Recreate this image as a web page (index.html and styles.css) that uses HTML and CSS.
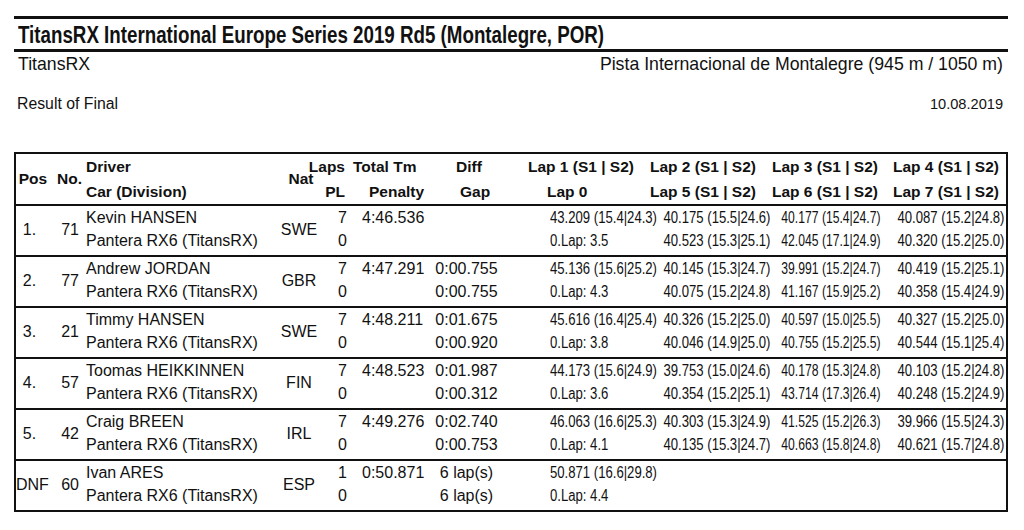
FILE: index.html
```html
<!DOCTYPE html>
<html lang="en">
<head>
<meta charset="utf-8">
<title>TitansRX Result of Final</title>
<link rel="stylesheet" href="styles.css">
</head>
<body>
<div class="page">
  <div class="title"><span class="sq">TitansRX International Europe Series 2019 Rd5 (Montalegre, POR)</span></div>
  <div class="subline">
    <span class="series">TitansRX</span>
    <span class="track">Pista Internacional de Montalegre (945 m / 1050 m)</span>
  </div>
  <div class="resline">
    <span class="result">Result of Final</span>
    <span class="date">10.08.2019</span>
  </div>

  <div class="table">
    <div class="row hdr">
      <div class="c-pos">Pos</div>
      <div class="c-no">No.</div>
      <div class="c-drv1">Driver</div>
      <div class="c-drv2">Car (Division)</div>
      <div class="c-nat">Nat</div>
      <div class="c-laps1"><span>Laps</span></div>
      <div class="c-pl">PL</div>
      <div class="c-tot">Total Tm</div>
      <div class="c-pen">Penalty</div>
      <div class="c-diff">Diff</div>
      <div class="c-gap">Gap</div>
      <div class="c-l1">Lap 1 (S1 | S2)</div>
      <div class="c-l0">Lap 0</div>
      <div class="c-l2">Lap 2 (S1 | S2)</div>
      <div class="c-l5">Lap 5 (S1 | S2)</div>
      <div class="c-l3">Lap 3 (S1 | S2)</div>
      <div class="c-l6">Lap 6 (S1 | S2)</div>
      <div class="c-l4">Lap 4 (S1 | S2)</div>
      <div class="c-l7">Lap 7 (S1 | S2)</div>
    </div>

    <div class="row">
      <div class="c-pos">1.</div>
      <div class="c-no">71</div>
      <div class="c-drv1">Kevin HANSEN</div>
      <div class="c-drv2">Pantera RX6 (TitansRX)</div>
      <div class="c-nat">SWE</div>
      <div class="c-laps1">7</div>
      <div class="c-pl">0</div>
      <div class="c-tot">4:46.536</div>
      <div class="c-l1 lap"><span>43.209 (15.4|24.3)</span></div>
      <div class="c-l0 lap"><span>0.Lap: 3.5</span></div>
      <div class="c-l2 lap"><span>40.175 (15.5|24.6)</span></div>
      <div class="c-l5 lap"><span>40.523 (15.3|25.1)</span></div>
      <div class="c-l3 lap"><span>40.177 (15.4|24.7)</span></div>
      <div class="c-l6 lap"><span>42.045 (17.1|24.9)</span></div>
      <div class="c-l4 lap"><span>40.087 (15.2|24.8)</span></div>
      <div class="c-l7 lap"><span>40.320 (15.2|25.0)</span></div>
    </div>

    <div class="row">
      <div class="c-pos">2.</div>
      <div class="c-no">77</div>
      <div class="c-drv1">Andrew JORDAN</div>
      <div class="c-drv2">Pantera RX6 (TitansRX)</div>
      <div class="c-nat">GBR</div>
      <div class="c-laps1">7</div>
      <div class="c-pl">0</div>
      <div class="c-tot">4:47.291</div>
      <div class="c-diff">0:00.755</div>
      <div class="c-gap">0:00.755</div>
      <div class="c-l1 lap"><span>45.136 (15.6|25.2)</span></div>
      <div class="c-l0 lap"><span>0.Lap: 4.3</span></div>
      <div class="c-l2 lap"><span>40.145 (15.3|24.7)</span></div>
      <div class="c-l5 lap"><span>40.075 (15.2|24.8)</span></div>
      <div class="c-l3 lap"><span>39.991 (15.2|24.7)</span></div>
      <div class="c-l6 lap"><span>41.167 (15.9|25.2)</span></div>
      <div class="c-l4 lap"><span>40.419 (15.2|25.1)</span></div>
      <div class="c-l7 lap"><span>40.358 (15.4|24.9)</span></div>
    </div>

    <div class="row">
      <div class="c-pos">3.</div>
      <div class="c-no">21</div>
      <div class="c-drv1">Timmy HANSEN</div>
      <div class="c-drv2">Pantera RX6 (TitansRX)</div>
      <div class="c-nat">SWE</div>
      <div class="c-laps1">7</div>
      <div class="c-pl">0</div>
      <div class="c-tot">4:48.211</div>
      <div class="c-diff">0:01.675</div>
      <div class="c-gap">0:00.920</div>
      <div class="c-l1 lap"><span>45.616 (16.4|25.4)</span></div>
      <div class="c-l0 lap"><span>0.Lap: 3.8</span></div>
      <div class="c-l2 lap"><span>40.326 (15.2|25.0)</span></div>
      <div class="c-l5 lap"><span>40.046 (14.9|25.0)</span></div>
      <div class="c-l3 lap"><span>40.597 (15.0|25.5)</span></div>
      <div class="c-l6 lap"><span>40.755 (15.2|25.5)</span></div>
      <div class="c-l4 lap"><span>40.327 (15.2|25.0)</span></div>
      <div class="c-l7 lap"><span>40.544 (15.1|25.4)</span></div>
    </div>

    <div class="row">
      <div class="c-pos">4.</div>
      <div class="c-no">57</div>
      <div class="c-drv1">Toomas HEIKKINNEN</div>
      <div class="c-drv2">Pantera RX6 (TitansRX)</div>
      <div class="c-nat">FIN</div>
      <div class="c-laps1">7</div>
      <div class="c-pl">0</div>
      <div class="c-tot">4:48.523</div>
      <div class="c-diff">0:01.987</div>
      <div class="c-gap">0:00.312</div>
      <div class="c-l1 lap"><span>44.173 (15.6|24.9)</span></div>
      <div class="c-l0 lap"><span>0.Lap: 3.6</span></div>
      <div class="c-l2 lap"><span>39.753 (15.0|24.6)</span></div>
      <div class="c-l5 lap"><span>40.354 (15.2|25.1)</span></div>
      <div class="c-l3 lap"><span>40.178 (15.3|24.8)</span></div>
      <div class="c-l6 lap"><span>43.714 (17.3|26.4)</span></div>
      <div class="c-l4 lap"><span>40.103 (15.2|24.8)</span></div>
      <div class="c-l7 lap"><span>40.248 (15.2|24.9)</span></div>
    </div>

    <div class="row">
      <div class="c-pos">5.</div>
      <div class="c-no">42</div>
      <div class="c-drv1">Craig BREEN</div>
      <div class="c-drv2">Pantera RX6 (TitansRX)</div>
      <div class="c-nat">IRL</div>
      <div class="c-laps1">7</div>
      <div class="c-pl">0</div>
      <div class="c-tot">4:49.276</div>
      <div class="c-diff">0:02.740</div>
      <div class="c-gap">0:00.753</div>
      <div class="c-l1 lap"><span>46.063 (16.6|25.3)</span></div>
      <div class="c-l0 lap"><span>0.Lap: 4.1</span></div>
      <div class="c-l2 lap"><span>40.303 (15.3|24.9)</span></div>
      <div class="c-l5 lap"><span>40.135 (15.3|24.7)</span></div>
      <div class="c-l3 lap"><span>41.525 (15.2|26.3)</span></div>
      <div class="c-l6 lap"><span>40.663 (15.8|24.8)</span></div>
      <div class="c-l4 lap"><span>39.966 (15.5|24.3)</span></div>
      <div class="c-l7 lap"><span>40.621 (15.7|24.8)</span></div>
    </div>

    <div class="row last">
      <div class="c-pos">DNF</div>
      <div class="c-no">60</div>
      <div class="c-drv1">Ivan ARES</div>
      <div class="c-drv2">Pantera RX6 (TitansRX)</div>
      <div class="c-nat">ESP</div>
      <div class="c-laps1">1</div>
      <div class="c-pl">0</div>
      <div class="c-tot">0:50.871</div>
      <div class="c-diff">6 lap(s)</div>
      <div class="c-gap">6 lap(s)</div>
      <div class="c-l1 lap"><span>50.871 (16.6|29.8)</span></div>
      <div class="c-l0 lap"><span>0.Lap: 4.4</span></div>
    </div>
  </div>
</div>
</body>
</html>
```

FILE: styles.css
```css
* { box-sizing: border-box; }

html, body {
  margin: 0;
  background: #fff;
}

body {
  font-family: "Liberation Sans", Arial, sans-serif;
  color: #111;
}

.page {
  width: 1024px;
  padding: 16px 16px 0 14px;
}

.title {
  border-top: 3px solid #111;
  border-bottom: 3px solid #111;
  padding: 2px 0 0 4px;
  height: 36px;
  font-weight: bold;
  font-size: 23px;
  line-height: 28px;
  white-space: nowrap;
}

.title .sq {
  display: inline-block;
  transform: scaleX(0.815);
  transform-origin: left center;
}

.subline {
  display: flex;
  justify-content: space-between;
  align-items: baseline;
  padding: 1px 5px 0 4px;
  font-size: 17.7px;
  line-height: 22px;
}

.resline {
  display: flex;
  justify-content: space-between;
  align-items: baseline;
  margin-top: 18px;
  padding: 0 5px 0 3px;
  line-height: 22px;
}

.result { font-size: 15.8px; }
.date { font-size: 14.6px; }

.table {
  margin-top: 37px;
  width: 994px;
  border: 2px solid #111;
}

.row {
  display: grid;
  grid-template-columns: 34px 32px 190px 54px 22px 84px 68px 145px 125px 115px 121px;
  grid-template-rows: 23px 24px;
  padding-bottom: 2px;
  border-bottom: 2px solid #111;
  font-size: 16px;
  white-space: nowrap;
}

.row.last { border-bottom: none; }

.row > div { line-height: 1; display: flex; align-items: center; }

.row.hdr {
  grid-template-rows: 25px 25px;
  padding-bottom: 0;
  font-weight: bold;
  font-size: 15.5px;
}

/* placement */
.c-pos  { grid-column: 1; grid-row: 1 / 3; justify-content: safe center; padding-right: 7px; }
.c-no   { grid-column: 2; grid-row: 1 / 3; justify-content: flex-end; padding-right: 3px; }
.c-drv1 { grid-column: 3; grid-row: 1; padding-left: 4px; }
.c-drv2 { grid-column: 3; grid-row: 2; padding-left: 4px; }
.c-nat  { grid-column: 4; grid-row: 1 / 3; justify-content: center; }
.c-laps1{ grid-column: 5; grid-row: 1; justify-content: flex-end; padding-right: 1px; }
.c-pl   { grid-column: 5; grid-row: 2; justify-content: flex-end; padding-right: 1px; }
.c-tot  { grid-column: 6; grid-row: 1; padding-left: 14px; }
.c-pen  { grid-column: 6; grid-row: 2; padding-left: 21px; }
.c-diff { grid-column: 7; grid-row: 1; justify-content: center; padding-left: 1px; }
.c-gap  { grid-column: 7; grid-row: 2; justify-content: center; padding-left: 1px; }
.c-l1   { grid-column: 8; grid-row: 1; padding-left: 50px; }
.c-l0   { grid-column: 8; grid-row: 2; padding-left: 50px; }
.c-l2   { grid-column: 9; grid-row: 1; justify-content: flex-end; }
.c-l5   { grid-column: 9; grid-row: 2; justify-content: flex-end; }
.c-l3   { grid-column: 10; grid-row: 1; justify-content: flex-end; padding-right: 5px; }
.c-l6   { grid-column: 10; grid-row: 2; justify-content: flex-end; padding-right: 5px; }
.c-l4   { grid-column: 11; grid-row: 1; justify-content: flex-end; padding-right: 2px; }
.c-l7   { grid-column: 11; grid-row: 2; justify-content: flex-end; padding-right: 2px; }

.lap { font-size: 16px; }

.lap span {
  display: inline-block;
  flex: none;
  transform: scaleX(0.82);
  transform-origin: right center;
}

.c-l1.lap span, .c-l0.lap span { transform-origin: left center; }
.c-l3.lap span, .c-l6.lap span { transform: scaleX(0.76); }

/* header specific offsets */
.hdr .c-pos   { padding-right: 0; justify-content: center; }
.hdr .c-no    { padding-right: 0; }
.hdr .c-nat   { padding-left: 4px; }
.hdr .c-laps1 { padding-right: 3px; }
.hdr .c-pl    { padding-right: 3px; }
.hdr .c-tot   { padding-left: 5px; }
.hdr .c-pen   { padding-left: 21px; }
.hdr .c-diff  { justify-content: flex-start; padding-left: 24px; }
.hdr .c-gap   { justify-content: flex-start; padding-left: 28px; }
.hdr .c-l1    { padding-left: 28px; }
.hdr .c-l0    { padding-left: 47px; }
.hdr .c-l2, .hdr .c-l5 { justify-content: flex-start; padding-left: 5px; padding-right: 0; }
.hdr .c-l3, .hdr .c-l6 { justify-content: flex-start; padding-left: 2px; padding-right: 0; }
.hdr .c-l4, .hdr .c-l7 { justify-content: flex-start; padding-left: 8px; padding-right: 0; }
```
